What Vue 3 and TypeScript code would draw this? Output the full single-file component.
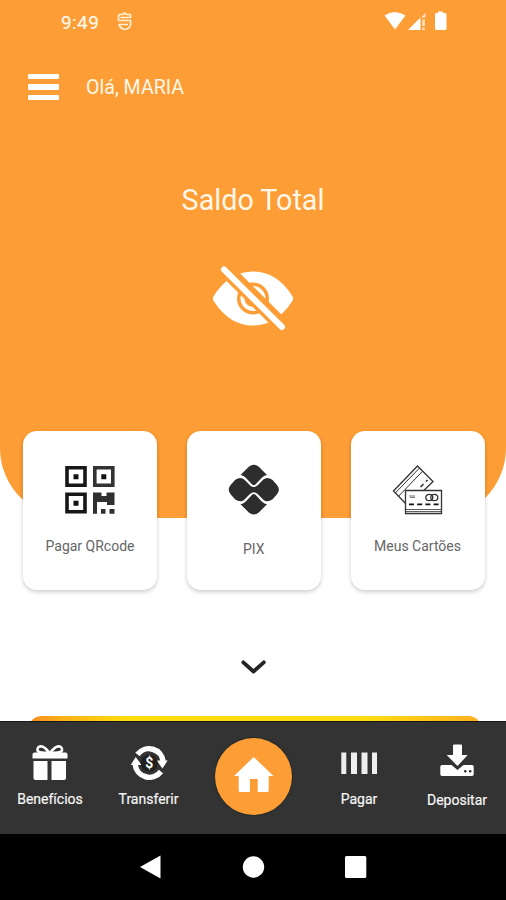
<script setup lang="ts">
interface Action {
  id: 'qr' | 'pix' | 'cards'
  label: string
}

const userName = 'MARIA'

const actions: Action[] = [
  { id: 'qr', label: 'Pagar QRcode' },
  { id: 'pix', label: 'PIX' },
  { id: 'cards', label: 'Meus Cartões' },
]
</script>

<template>
  <div class="phone">
    <main class="content">
      <section class="hero">
        <div class="status">
          <span class="clock">9:49</span>
          <svg class="status-app" viewBox="0 0 16 20" width="16" height="20">
            <path d="M1.500 9.500V5Q1.500 3.500 3 3.500H5.500L7.500 1.800L9.500 3.500H13.500V6.500H3.500M1.500 9.500H13.500V13.500Q13 17.500 8 18.500Q3 17.500 2 13.500H11" />
          </svg>
          <svg class="status-system" viewBox="384 10 64 22" width="64" height="22">
            <path d="M384.500 15.500Q394.800 8.500 405.500 15.500L395 29.500Z" />
            <path d="M408 30L420.500 17.500V30Z" />
            <path d="M421 17.500L425.500 13v4.500ZM422.300 19.500h2.600v6.500h-2.600ZM422.300 27.500h2.600v2.500h-2.600Z" opacity=".7" />
            <path d="M436 13h2v-1.500h5V13h2q1.500 0 1.500 1.500v14q0 1.500-1.500 1.500h-8.500q-1.500 0-1.500-1.500v-14Q435 13 436 13Z" />
          </svg>
        </div>
        <header class="greeting">
          <button class="menu" aria-label="Menu"><i /><i /><i /></button>
          <span>Olá, {{ userName }}</span>
        </header>
        <h1 class="balance-title">Saldo Total</h1>
        <svg class="eye" viewBox="211.500 264 84 68" width="84" height="68">
          <path d="M214.500 295.500Q230 271.500 253.500 271.500T292.500 295.500Q294.700 298.500 292.500 301.500Q277 325.500 253.500 325.500T214.500 301.500Q212.300 298.500 214.500 295.500Z" fill="#fff" />
          <circle cx="253.500" cy="298.500" r="16" fill="#fd9d35" />
          <circle cx="253.500" cy="298.500" r="10.500" fill="none" stroke="#fff" stroke-width="4" />
          <path d="M222 265.500L285 328" stroke="#fd9d35" stroke-width="15" />
          <path d="M224.500 269.500L282.500 327" stroke="#fff" stroke-width="6" stroke-linecap="round" />
        </svg>
      </section>

      <section class="actions">
        <button v-for="action in actions" :key="action.id" class="card" :class="action.id">
          <svg v-if="action.id === 'qr'" viewBox="64 464 52 52" width="52" height="52">
            <g fill="none" stroke-width="3.600">
              <path d="M67 467.800h18v17.500H67ZM67 494.300h18v17.500H67Z" stroke="#171717" />
              <path d="M94.800 467.800h18v17.500h-18Z" stroke="#333" />
            </g>
            <path d="M73.500 474.200h5v5h-5ZM101.300 474.200h5v5h-5ZM73.500 500.800h5v5h-5Z" fill="#111" />
            <path d="M93 492.500h8.500v3.500h5v-3.500h8v12.500h-7.500v-3h-10v11.700h-4ZM101 509h4.500v4.700H101ZM109.500 509h5v4.700h-5Z" fill="#303030" />
          </svg>
          <svg v-else-if="action.id === 'pix'" viewBox="228 464 52 52" width="52" height="52">
            <g fill="#2d2d2d">
              <path d="M248.800 466.700Q253.800 462.700 258.800 466.700L267 475Q264.500 475.300 262 477.500L255.700 484.200Q253.800 486 251.900 484.200L245.500 477.500Q243 475.300 240.500 475Z" />
              <path d="M248.800 512.500Q253.800 516.500 258.800 512.500L267 504.200Q264.500 503.900 262 501.700L255.700 495Q253.800 493.200 251.900 495L245.500 501.700Q243 503.900 240.500 504.200Z" />
              <path d="M235 480Q237.500 477.900 240.500 477.900Q242.500 478 244.500 479.800L250.200 485.500Q253.800 488.600 257.400 485.500L263.100 479.800Q265 478 267.100 477.900Q270 477.900 272.600 480L276.800 484.800Q281 489.600 276.800 494.400L272.600 499.200Q270 501.300 267.100 501.300Q265 501.200 263.100 499.400L257.400 493.700Q253.800 490.600 250.200 493.700L244.500 499.400Q242.500 501.200 240.500 501.300Q237.500 501.300 235 499.200L230.800 494.400Q226.600 489.600 230.800 484.800Z" />
            </g>
          </svg>
          <svg v-else viewBox="391 464 54 52" width="54" height="52">
            <g fill="#fff" stroke="#333" stroke-width="1.300">
              <path d="M393.500 491L417.500 466L433 481.500L408 506Z" />
              <path d="M395.300 493L419.500 468M398.500 496.300L422.500 471.300" stroke-width="1" />
              <path d="M420.500 487l3-3M426 481.500l1.500-1.500" stroke-width="1.600" />
              <path d="M405.500 490.500h36v23h-36Z" />
            </g>
            <g fill="none" stroke="#333">
              <path d="M406 509.500h35M406 511.500h35" stroke-width=".8" />
              <path d="M409 496h6M410 497.500h5" stroke="#777" stroke-width="1" />
              <ellipse cx="429.300" cy="497.500" rx="3.500" ry="3.200" stroke-width="1.300" />
              <ellipse cx="434.300" cy="497.500" rx="3.500" ry="3.200" stroke-width="1.300" />
              <path d="M409 504.300h30" stroke="#111" stroke-width="1.800" stroke-dasharray="5 3.200" />
            </g>
          </svg>
          <span>{{ action.label }}</span>
        </button>
      </section>

      <svg class="chevron" viewBox="240 658 27 18" width="27" height="18">
        <path d="M243.300 662.300L253.500 671.500L263.800 662.300" />
      </svg>
      <div class="promo" />
    </main>

    <nav class="tabs">
      <a class="tab">
        <svg viewBox="30 743 40 38" width="40" height="38">
          <path d="M34.500 752.500h31q2 0 2 2v4h-35v-4q0-2 2-2ZM33.500 761h14v19h-12q-2 0-2-2ZM51.500 761H66v17q0 2-2 2H51.500Z" />
          <path d="M49.500 753C44 753 38.500 753 37.500 750.500C37 747 39.500 746 42 746.500C45.500 747.500 47.500 750.500 49.500 753ZM50 753C55.500 753 61 753 62 750.500C62.500 747 60 746 57.500 746.500C54 747.500 52 750.500 50 753Z" class="line" />
        </svg>
        <span>Benefícios</span>
      </a>
      <a class="tab transfer">
        <svg viewBox="127.800 743 40 38" width="40" height="38">
          <path d="M136.300 754.500A14.300 14.300 0 0 1 162 761.500M159.700 771.500A14.300 14.300 0 0 1 134 764.500" class="ring" />
          <path d="M155.500 760.500H166.500L161.200 768.500ZM129.500 765L134.500 757L140.500 765Z" />
          <circle cx="148" cy="763" r="8.500" fill="#202020" />
          <text x="148" y="768" text-anchor="middle">$</text>
        </svg>
        <span>Transferir</span>
      </a>
      <a class="home" aria-label="Home">
        <svg viewBox="234 755 40 37" width="40" height="37">
          <path d="M253.700 756L273.500 775H268.700V789.500Q268.700 791 267.200 791H257.700V778H250V791H240.200Q238.700 791 238.700 789.500V775H234Z" />
        </svg>
      </a>
      <a class="tab pay">
        <svg viewBox="339 743 40 38" width="40" height="38">
          <path d="M341.300 752.500h5V774h-5ZM351 752.500h6V774h-6ZM361.500 752.500h6V774h-6ZM372 752.500h5V774h-5Z" fill="#eee" />
        </svg>
        <span>Pagar</span>
      </a>
      <a class="tab deposit">
        <svg viewBox="437.500 743 40 38" width="40" height="38">
          <path d="M454.500 744.500h7q1 0 1 1V755h5.700L458 766L447.200 755H453.500V745.500q0-1 1-1Z" />
          <path d="M442.500 765h9.500l6 5l6-5h8.500q1.700 0 1.700 1.700v7.500q0 1.800-1.700 1.800h-30q-1.700 0-1.700-1.800v-7.500q0-1.700 1.700-1.700Z" />
          <circle cx="465.800" cy="771.300" r="1.200" fill="#222" />
          <circle cx="470.700" cy="771.300" r="1.200" fill="#222" />
        </svg>
        <span>Depositar</span>
      </a>
    </nav>

    <footer class="system-nav">
      <svg viewBox="130 850 246 34" width="246" height="34">
        <path d="M140 867L160.500 855.500V878.500Z" />
        <circle cx="253.500" cy="867" r="10.700" />
        <rect x="345" y="856" width="21.300" height="22" rx="1.500" />
      </svg>
    </footer>
  </div>
</template>

<style>
body {
  margin: 0;
}
</style>

<style scoped>
.phone {
  width: 506px;
  height: 900px;
  overflow: hidden;
  background: #fff;
  font-family: Roboto, "Liberation Sans", sans-serif;
}
button {
  padding: 0;
  border: 0;
  font: inherit;
}
svg {
  display: block;
  flex: none;
}
.content {
  height: 721px;
  overflow: hidden;
}
.hero {
  display: flex;
  flex-direction: column;
  align-items: center;
  height: 517.5px;
  background: #fd9d35;
  border-radius: 0 0 70px 70px;
  color: #fff7e8;
}
.status {
  display: flex;
  align-items: center;
  box-sizing: border-box;
  width: 100%;
  height: 42px;
  padding: 0 58px 0 61px;
}
.clock {
  width: 56px;
  padding-top: 2px;
  font-size: 19px;
  letter-spacing: 0.4px;
  -webkit-text-stroke: 0.2px #fff7e8;
}
.status-app {
  fill: none;
  stroke: #fff1d8;
  stroke-width: 1.7;
  stroke-linejoin: round;
}
.status-system {
  margin-left: auto;
  fill: #fff;
}
.greeting {
  display: flex;
  align-items: center;
  gap: 27.500px;
  box-sizing: border-box;
  width: 100%;
  height: 90px;
  padding-left: 28px;
  font-size: 19.600px;
}
.menu {
  display: flex;
  flex-direction: column;
  gap: 5.200px;
  width: 30.500px;
  background: none;
}
.menu i {
  height: 5.400px;
  border-radius: 1px;
  background: #fff;
}
.balance-title {
  margin: 50px 0 0;
  font-size: 28.700px;
  font-weight: 400;
  line-height: 36px;
}
.eye {
  margin-top: 46px;
}
.actions {
  display: flex;
  justify-content: space-between;
  margin: -86.500px 21.500px 0 23px;
}
.card {
  display: flex;
  flex-direction: column;
  align-items: center;
  width: 134px;
  height: 158.500px;
  padding-top: 33px;
  border-radius: 14px;
  background: #fff;
  box-shadow: 0 2px 4px rgba(0, 0, 0, 0.2);
  color: #666;
  font-size: 14px;
  line-height: 18px;
}
.card span {
  margin-top: 21px;
}
.card.pix span {
  margin-top: 24px;
}
.chevron {
  margin: 68.500px auto 0;
  fill: none;
  stroke: #252525;
  stroke-width: 3.800;
  stroke-linecap: round;
  stroke-linejoin: round;
}
.promo {
  height: 100px;
  margin: 40px 24px 0 28px;
  border-radius: 14px;
  background: linear-gradient(90deg, #f58a22, #fbb21b 8%, #ffdc0b 22%, #ffdc12 75%, #fdae20);
}
.tabs {
  display: grid;
  grid-template-columns: 100px 97px 113px 98px 98px;
  box-sizing: border-box;
  height: 112.500px;
  border-top: 1px solid #171717;
  background: #333;
  color: #f5f5f5;
  fill: #fff;
}
.tab {
  display: flex;
  flex-direction: column;
  align-items: center;
  padding-top: 21px;
  font-size: 14px;
  line-height: 18px;
  -webkit-text-stroke: 0.200px #f5f5f5;
}
.tab span {
  margin-top: 9px;
}
.deposit span {
  margin-top: 10px;
}
.line {
  fill: none;
  stroke: #fff;
  stroke-width: 2.600;
}
.ring {
  fill: none;
  stroke: #fff;
  stroke-width: 5.500;
}
.transfer text {
  font-size: 14px;
  font-weight: 700;
}
.home {
  display: flex;
  align-items: center;
  justify-content: center;
  width: 77px;
  height: 77px;
  margin: 16px auto 0;
  border-radius: 50%;
  background: #fd9d35;
  box-shadow: 0 0 1px 1px #242b2b;
}
.home svg {
  margin-top: -5px;
}
.system-nav {
  display: flex;
  height: 66.500px;
  padding: 16.500px 0 0 130px;
  box-sizing: border-box;
  background: #000;
  fill: #fff;
}
</style>
